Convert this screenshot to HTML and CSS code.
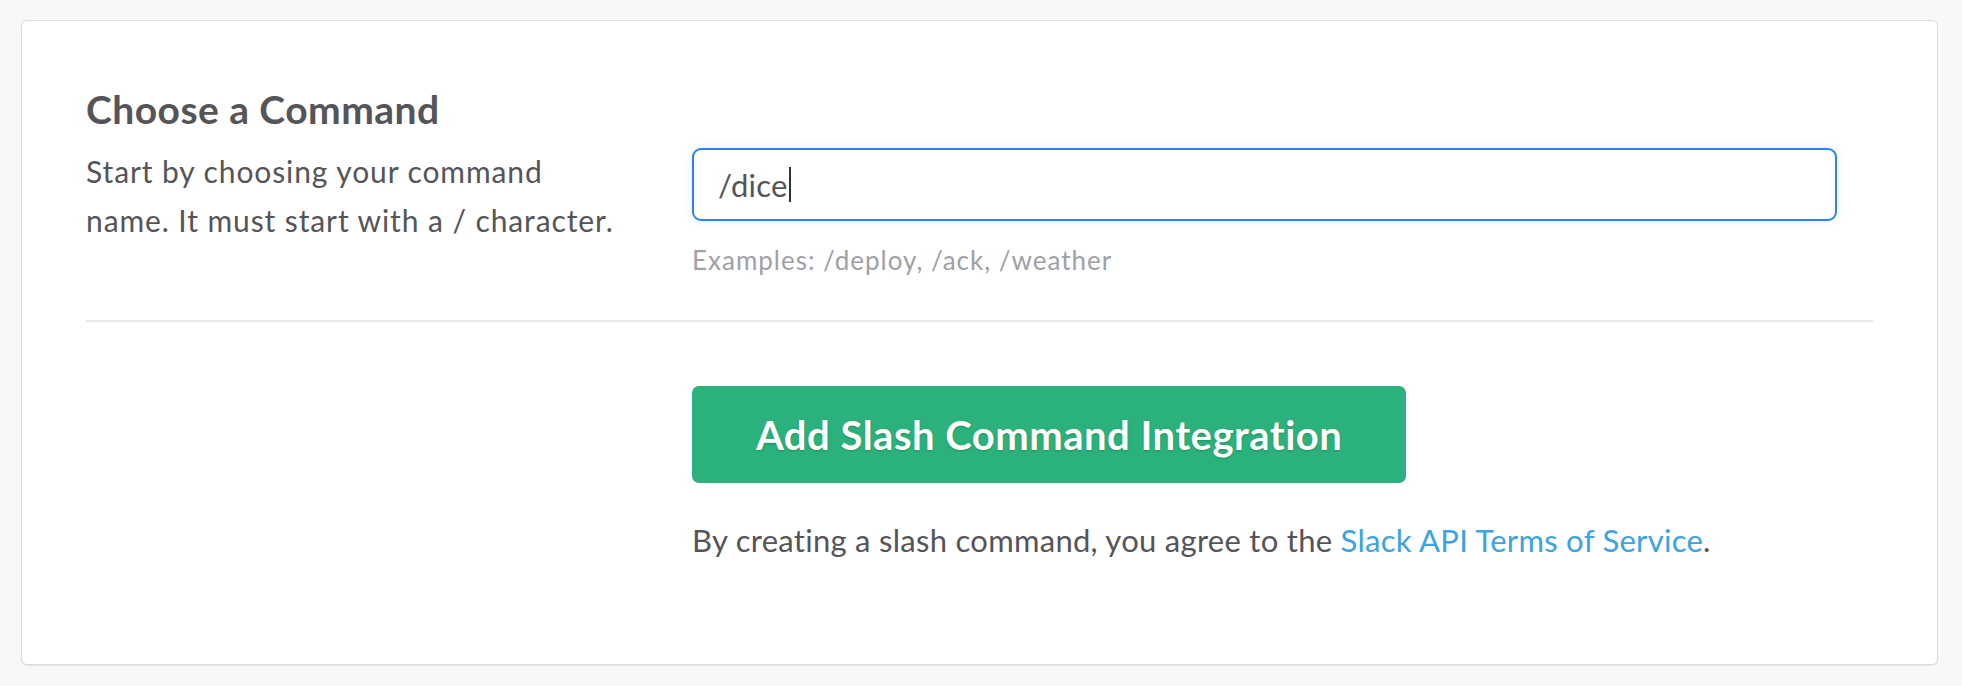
FILE: index.html
```html
<!DOCTYPE html>
<html lang="en">
<head>
<meta charset="utf-8">
<title>Choose a Command</title>
<link rel="stylesheet" href="styles.css">
</head>
<body>
<div class="page">
  <section class="card">
    <h3 class="card-title">Choose a Command</h3>
    <div class="row">
      <p class="desc">Start by choosing your command name. It must start with a / character.</p>
      <div class="field">
        <div class="input" role="textbox" aria-label="Command">/dice<span class="caret"></span></div>
        <p class="hint">Examples: /deploy, /ack, /weather</p>
      </div>
    </div>
    <hr class="divider">
    <div class="row">
      <div class="spacer"></div>
      <div class="field">
        <button class="btn" type="button">Add Slash Command Integration</button>
        <p class="terms">By creating a slash command, you agree to the <a href="#">Slack API Terms of Service</a>.</p>
      </div>
    </div>
  </section>
</div>
</body>
</html>
```
FILE: styles.css
```css
html, body {
  margin: 0;
  padding: 0;
  background: #f8f8f8;
}
body {
  font-family: Lato, "Open Sans", "Liberation Sans", sans-serif;
  color: #555459;
}
.page {
  padding: 20px 24px 22px 21px;
}
.card {
  background: #fff;
  border: 1px solid #dcdcdc;
  border-radius: 6px;
  box-shadow: 0 1px 1px rgba(0, 0, 0, 0.08);
  padding: 64px 64px 0 64px;
  box-sizing: border-box;
  height: 645px;
}
.card-title {
  margin: 0 0 14px 0;
  font-size: 39px;
  line-height: 48px;
  letter-spacing: 0.45px;
  font-weight: 700;
  color: #555459;
}
.row {
  display: grid;
  grid-template-columns: 606px 1fr;
  align-items: start;
}
.desc {
  margin: 0;
  font-size: 30px;
  line-height: 49px;
  letter-spacing: 0.9px;
  max-width: 540px;
}
.field {
  padding-right: 36px;
}
.input {
  margin-top: 1px;
  height: 73px;
  box-sizing: border-box;
  border: 2px solid #2d80f8;
  border-radius: 9px;
  box-shadow: 0 0 10px rgba(45, 128, 248, 0.12);
  padding: 0 0 0 24px;
  display: flex;
  align-items: center;
  font-size: 31px;
  letter-spacing: 0.3px;
  color: #555459;
}
.caret {
  display: inline-block;
  width: 2px;
  height: 35px;
  background: #333;
  margin-left: 1px;
}
.hint {
  margin: 22px 0 0 0;
  font-size: 26px;
  line-height: 34px;
  letter-spacing: 1px;
  color: #a0a0a8;
}
.divider {
  border: 0;
  height: 2px;
  background: #e8e8e8;
  margin: 43px 0 64px 0;
}
.btn {
  display: block;
  font-family: inherit;
  font-size: 40px;
  letter-spacing: 0.5px;
  font-weight: 700;
  color: #fff;
  background: #2bb17b;
  border: 0;
  border-radius: 7px;
  height: 97px;
  padding: 0 64px;
  text-shadow: 0 1px 2px rgba(0, 0, 0, 0.2);
  cursor: pointer;
}
.terms {
  margin: 37px 0 0 0;
  font-size: 31px;
  line-height: 40px;
  letter-spacing: 0.28px;
}
.terms a {
  color: #3aa3e3;
  text-decoration: none;
}
```
